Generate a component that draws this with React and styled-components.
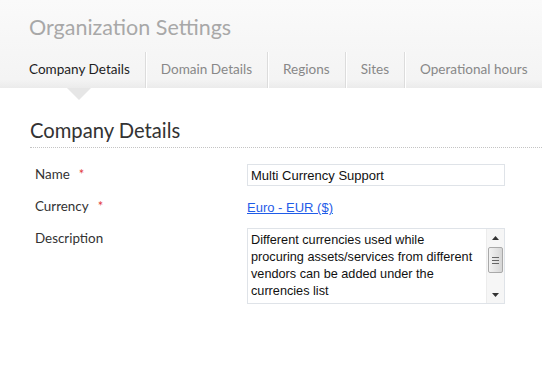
import React from "react";
import styled, { createGlobalStyle } from "styled-components";

const Global = createGlobalStyle`
  html, body { margin: 0; padding: 0; background: #fff; }
  body { font-family: "Lato", "Open Sans", sans-serif; width: 542px; height: 382px; overflow: hidden; }
`;

const Page = styled.div`
  display: flex;
  flex-direction: column;
`;

const Header = styled.header`
  position: relative;
  height: 88px;
  background: linear-gradient(#fafafa, #f4f4f4 90%, #ebebeb);
  display: flex;
  flex-direction: column;
  justify-content: space-between;
`;

const PageTitle = styled.h1`
  margin: 12px 0 0 29px;
  font-size: 21.5px;
  font-weight: 400;
  line-height: 30px;
  color: #a8a8a8;
`;

const Tabs = styled.nav`
  display: flex;
  height: 36px;
  padding-left: 14px;
`;

const Tab = styled.div`
  position: relative;
  padding: 0 15px 3px;
  display: flex;
  align-items: center;
  font-size: 13.55px;
  color: ${(p) => (p.$active ? "#1e1e1e" : "#888")};
  border-right: 1px solid #dcdcdc;
  box-shadow: 1px 0 0 #fff;
  white-space: nowrap;
  &::after {
    content: "";
    display: ${(p) => (p.$active ? "block" : "none")};
    position: absolute;
    left: 50%;
    top: 100%;
    margin-left: -12px;
    border-left: 12px solid transparent;
    border-right: 12px solid transparent;
    border-top: 12px solid #e6e6e6;
  }
`;

const Content = styled.main`
  padding-left: 30px;
`;

const SectionTitle = styled.h2`
  margin: 28px 0 0;
  padding-bottom: 3px;
  font-size: 20.2px;
  font-weight: 400;
  line-height: 28px;
  color: #333;
  border-bottom: 1px dotted #c4c4c4;
`;

const Form = styled.div`
  display: grid;
  grid-template-columns: 212px 258px;
  row-gap: 11px;
  padding: 16px 0 0 5px;
`;

const Label = styled.div`
  font-size: 13.4px;
  color: #333;
  display: flex;
  align-items: ${(p) => (p.$top ? "flex-start" : "center")};
  padding-top: ${(p) => (p.$top ? "2px" : "0")};
  padding-bottom: ${(p) => (p.$top ? "0" : "2px")};
`;

const Required = styled.span`
  color: #e23b3b;
  margin-left: 9px;
  font-size: 13px;
`;

const Control = styled.div`
  display: flex;
  align-items: center;
  min-height: ${(p) => p.$h || 22}px;
`;

const Input = styled.input`
  box-sizing: border-box;
  width: 258px;
  height: 22px;
  border: 1px solid #dfe3e8;
  padding: 0 3px;
  font-family: "Liberation Sans", Arial, sans-serif;
  font-size: 13px;
  color: #111;
  outline: none;
`;

const Link = styled.a`
  font-family: "Liberation Sans", Arial, sans-serif;
  font-size: 13px;
  color: #1f5ce8;
  text-decoration: underline;
`;

const TextBox = styled.div`
  box-sizing: border-box;
  width: 258px;
  height: 76px;
  border: 1px solid #dfe3e8;
  display: flex;
`;

const TextBody = styled.div`
  flex: 1;
  padding: 3px 9px 3px 3px;
  font-family: "Liberation Sans", Arial, sans-serif;
  font-size: 12.7px;
  line-height: 17px;
  color: #111;
  overflow: hidden;
`;

const Scrollbar = styled.div`
  width: 17px;
  background: #f6f6f6;
  border-left: 1px solid #ececec;
  display: flex;
  flex-direction: column;
  align-items: center;
`;

const ArrowBtn = styled.div`
  height: 17px;
  width: 17px;
  display: flex;
  align-items: center;
  justify-content: center;
`;

const Thumb = styled.div`
  box-sizing: border-box;
  width: 15px;
  height: 26px;
  margin-top: 1px;
  border: 1px solid #a9a9a9;
  border-radius: 2px;
  background: linear-gradient(90deg, #f2f2f2, #e4e4e4 50%, #d6d6d6);
  display: flex;
  align-items: center;
  justify-content: center;
`;

const Spacer = styled.div`
  flex: 1;
`;

const Row = ({ label, required, top, h, children }) => (
  <>
    <Label $top={top}>
      {label}
      {required && <Required>*</Required>}
    </Label>
    <Control $h={h}>{children}</Control>
  </>
);

export default function App() {
  const tabs = ["Company Details", "Domain Details", "Regions", "Sites", "Operational hours"];
  return (
    <Page>
      <Global />
      <Header>
        <PageTitle>Organization Settings</PageTitle>
        <Tabs>
          {tabs.map((t, i) => (
            <Tab key={t} $active={i === 0}>{t}</Tab>
          ))}
        </Tabs>
      </Header>
      <Content>
        <SectionTitle>Company Details</SectionTitle>
        <Form>
          <Row label="Name" required>
            <Input defaultValue="Multi Currency Support" />
          </Row>
          <Row label="Currency" required h={20}>
            <Link href="#">Euro - EUR ($)</Link>
          </Row>
          <Row label="Description" top h={76}>
            <TextBox>
              <TextBody>
                Different currencies used while procuring assets/services from different vendors can be added under the currencies list
              </TextBody>
              <Scrollbar>
                <ArrowBtn>
                  <svg width="7" height="4" viewBox="0 0 7 4"><path d="M3.5 0L7 4H0z" fill="#333" /></svg>
                </ArrowBtn>
                <Thumb>
                  <svg width="7" height="7" viewBox="0 0 7 7">
                    <path d="M0 0.5H7M0 3.5H7M0 6.5H7" stroke="#666" strokeWidth="1" />
                  </svg>
                </Thumb>
                <Spacer />
                <ArrowBtn>
                  <svg width="7" height="4" viewBox="0 0 7 4"><path d="M0 0H7L3.5 4z" fill="#333" /></svg>
                </ArrowBtn>
              </Scrollbar>
            </TextBox>
          </Row>
        </Form>
      </Content>
    </Page>
  );
}
